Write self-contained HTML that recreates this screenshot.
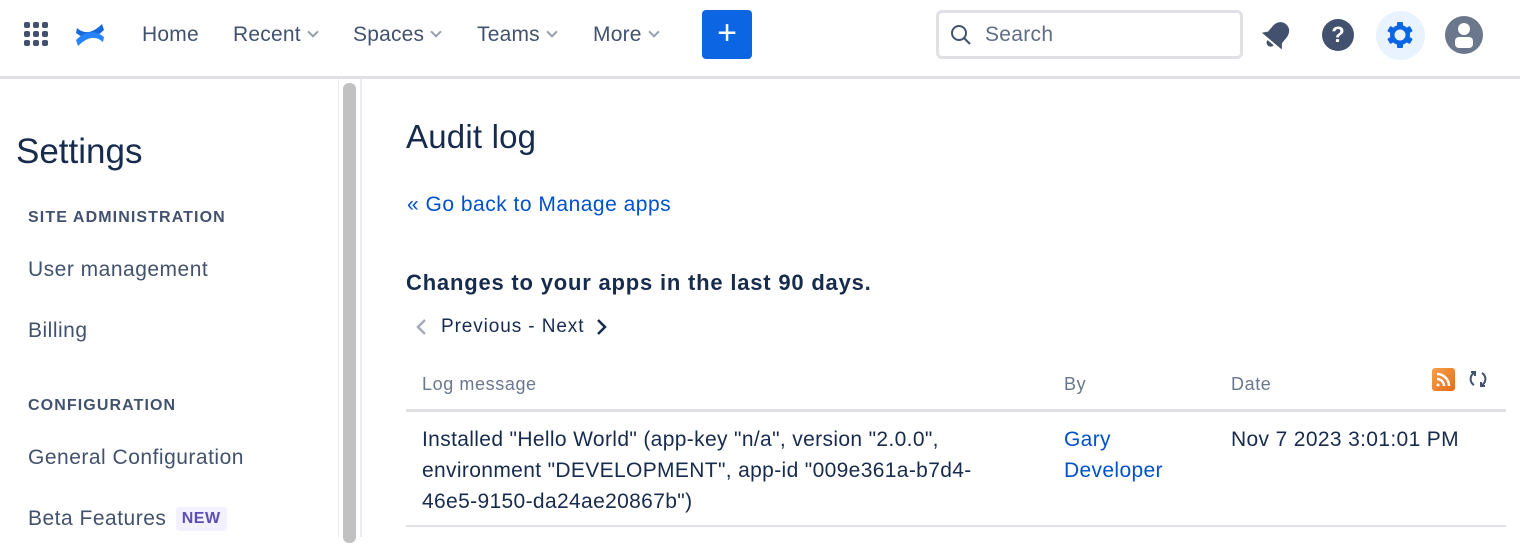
<!DOCTYPE html>
<html><head><meta charset="utf-8"><style>
*{box-sizing:border-box;margin:0;padding:0}
body{width:1520px;height:537px;overflow:hidden;background:#fff;font-family:"Liberation Sans",sans-serif;color:#172b4d;position:relative}
.a{position:absolute;white-space:nowrap}
.nav{font-size:21px;color:#42526e;top:23px;letter-spacing:.2px}
.chev{display:inline-block;width:8px;height:8px;border-right:2px solid #97a0af;border-bottom:2px solid #97a0af;transform:rotate(45deg);margin-left:8px;position:relative;top:-5px}
.side{font-size:21px;color:#42526e;left:28px;letter-spacing:.5px}
.hd{font-size:16px;font-weight:bold;color:#42526e;left:28px;letter-spacing:1.1px}
.th{font-size:18px;color:#6b778c;top:374px;letter-spacing:.6px}
.td{font-size:21px;line-height:31px;top:424px;letter-spacing:.35px}
a{color:#0052cc;text-decoration:none}
</style></head><body>
<div class="a" style="left:0;top:76px;width:1520px;height:3px;background:#dfe1e6"></div>
<svg class="a" style="left:24px;top:22px" width="26" height="26" viewBox="0 0 26 26" fill="#42526e">
<rect x="0" y="0" width="6" height="6" rx="2"/><rect x="9" y="0" width="6" height="6" rx="2"/><rect x="18" y="0" width="6" height="6" rx="2"/>
<rect x="0" y="9" width="6" height="6" rx="2"/><rect x="9" y="9" width="6" height="6" rx="2"/><rect x="18" y="9" width="6" height="6" rx="2"/>
<rect x="0" y="18" width="6" height="6" rx="2"/><rect x="9" y="18" width="6" height="6" rx="2"/><rect x="18" y="18" width="6" height="6" rx="2"/></svg>
<svg class="a" style="left:74px;top:20px" width="32" height="30" viewBox="0 0 32 30"><path d="M3 8 Q14 18 28 4 L30 10 Q16 24 2 13 Z" fill="#1868db"/><path d="M29 22 Q18 12 4 26 L2 20 Q16 6 30 17 Z" fill="#2684ff"/></svg>
<div class="a nav" style="left:142px">Home</div>
<div class="a nav" style="left:233px">Recent<span class="chev"></span></div>
<div class="a nav" style="left:353px">Spaces<span class="chev"></span></div>
<div class="a nav" style="left:477px">Teams<span class="chev"></span></div>
<div class="a nav" style="left:593px">More<span class="chev"></span></div>
<div class="a" style="left:702px;top:10px;width:50px;height:49px;background:#0c66e4;border-radius:4px;color:#fff;font-size:34px;text-align:center;line-height:47px">+</div>
<div class="a" style="left:936px;top:10px;width:307px;height:49px;border:3px solid #dfe1e6;border-radius:6px"></div>
<svg class="a" style="left:950px;top:24px" width="22" height="22" viewBox="0 0 22 22" fill="none" stroke="#42526e" stroke-width="2"><circle cx="9" cy="9" r="7"/><path d="M14 14l6 6"/></svg>
<div class="a" style="left:985px;top:23px;font-size:21px;color:#5e6c84;letter-spacing:.3px">Search</div>
<svg class="a" style="left:1260px;top:18px" width="34" height="34" viewBox="0 0 34 34" fill="#42526e"><g transform="rotate(40 17 17)"><path d="M17 3c-6 0-9 5-9 10v7l-4 5h26l-4-5v-7c0-5-3-10-9-10z"/><path d="M13 27a4 4 0 0 0 8 0z"/></g></svg>
<div class="a" style="left:1322px;top:19px;width:32px;height:32px;border-radius:50%;background:#42526e;color:#fff;font-weight:bold;font-size:22px;text-align:center;line-height:32px">?</div>
<div class="a" style="left:1376px;top:11px;width:49px;height:49px;border-radius:50%;background:#e9f2ff"></div>
<svg class="a" style="left:1385px;top:20px" width="30" height="30" viewBox="0 0 30 30"><g fill="#0c66e4"><circle cx="15" cy="15" r="10"/><rect x="12" y="2" width="6" height="26" rx="1"/><rect x="12" y="2" width="6" height="26" rx="1" transform="rotate(60 15 15)"/><rect x="12" y="2" width="6" height="26" rx="1" transform="rotate(120 15 15)"/></g><circle cx="15" cy="15" r="5.5" fill="#e9f2ff"/></svg>
<svg class="a" style="left:1445px;top:16px" width="38" height="38" viewBox="0 0 38 38"><circle cx="19" cy="19" r="19" fill="#6b778c"/><circle cx="19" cy="13" r="6" fill="#fff"/><rect x="10" y="21" width="18" height="11" rx="4" fill="#fff"/></svg>

<div class="a" style="left:338px;top:79px;width:1px;height:458px;background:#ebecf0"></div>
<div class="a" style="left:343px;top:83px;width:13px;height:460px;background:#c1c1c1;border-radius:6px"></div>
<div class="a" style="left:360px;top:79px;width:2px;height:458px;background:#ebecf0"></div>

<div class="a" style="left:16px;top:132px;font-size:35px">Settings</div>
<div class="a hd" style="top:209px">SITE ADMINISTRATION</div>
<div class="a side" style="top:258px">User management</div>
<div class="a side" style="top:319px">Billing</div>
<div class="a hd" style="top:397px">CONFIGURATION</div>
<div class="a side" style="top:446px">General Configuration</div>
<div class="a side" style="top:507px">Beta Features <span style="display:inline-block;background:#f3f0ff;color:#5e4db2;font-weight:bold;font-size:16px;padding:3px 6px;border-radius:3px;margin-left:3px;vertical-align:2px;letter-spacing:.5px">NEW</span></div>

<div class="a" style="left:406px;top:118px;font-size:33px;letter-spacing:.2px">Audit log</div>
<div class="a" style="left:407px;top:193px;font-size:21px;letter-spacing:.5px"><a>« Go back to Manage apps</a></div>
<div class="a" style="left:406px;top:270px;font-size:22px;font-weight:bold;letter-spacing:.8px">Changes to your apps in the last 90 days.</div>
<svg class="a" style="left:415px;top:318px" width="12" height="18" viewBox="0 0 12 18" fill="none" stroke="#a5adba" stroke-width="2.5"><path d="M10 2L3 9l7 7"/></svg>
<div class="a" style="left:441px;top:316px;font-size:19px;letter-spacing:.9px">Previous - Next</div>
<svg class="a" style="left:596px;top:318px" width="12" height="18" viewBox="0 0 12 18" fill="none" stroke="#172b4d" stroke-width="2.5"><path d="M2 2l7 7-7 7"/></svg>

<div class="a th" style="left:422px">Log message</div>
<div class="a th" style="left:1064px">By</div>
<div class="a th" style="left:1231px">Date</div>
<div class="a" style="left:1432px;top:368px;width:23px;height:23px;border-radius:3px;background:linear-gradient(135deg,#f9a04a,#e46b1c)"></div>
<svg class="a" style="left:1432px;top:368px" width="23" height="23" viewBox="0 0 23 23" fill="none" stroke="#fff" stroke-width="2.5"><circle cx="6" cy="17" r="1.5" fill="#fff" stroke="none"/><path d="M5 11a7 7 0 017 7M5 6a12 12 0 0112 12"/></svg>
<svg class="a" style="left:1468px;top:369px" width="20" height="20" viewBox="0 0 20 20" fill="none" stroke="#42526e" stroke-width="2"><path d="M6 4a7 7 0 0 0 0 12"/><path d="M14 16a7 7 0 0 0 0-12"/><path d="M3 3h4v4" /><path d="M17 17h-4v-4"/></svg>
<div class="a" style="left:406px;top:409px;width:1100px;height:3px;background:#dfe1e6"></div>
<div class="a td" style="left:422px">Installed "Hello World" (app-key "n/a", version "2.0.0",<br>environment "DEVELOPMENT", app-id "009e361a-b7d4-<br>46e5-9150-da24ae20867b")</div>
<div class="a td" style="left:1064px"><a>Gary<br>Developer</a></div>
<div class="a td" style="left:1231px">Nov 7 2023 3:01:01 PM</div>
<div class="a" style="left:406px;top:525px;width:1100px;height:2px;background:#dfe1e6"></div>
</body></html>
